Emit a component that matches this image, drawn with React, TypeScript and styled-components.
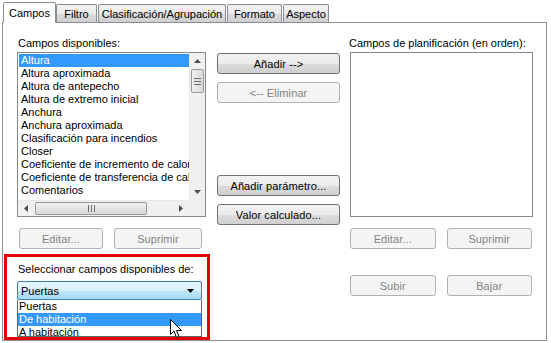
import styled, { createGlobalStyle } from "styled-components";

const GlobalStyle = createGlobalStyle`
  html, body {
    margin: 0;
    padding: 0;
    background: #ffffff;
  }
  body {
    font-family: "Liberation Sans", Arial, sans-serif;
    font-size: 11px;
    color: #000;
  }
`;

const Window = styled.div`
  width: 551px;
  height: 343px;
  box-sizing: border-box;
  padding: 2px 4px 3px 2px;
  display: flex;
  flex-direction: column;
  background: #ffffff;
  position: relative;
  overflow: hidden;
`;

const TabStrip = styled.div`
  display: flex;
  align-items: flex-end;
  height: 21px;
  padding-left: 1px;
  position: relative;
  z-index: 2;
`;

const Tab = styled.div<{ $w: number; $active?: boolean }>`
  width: ${(p) => p.$w}px;
  box-sizing: border-box;
  height: ${(p) => (p.$active ? 21 : 18)}px;
  display: flex;
  align-items: center;
  justify-content: center;
  border: 1px solid #898c95;
  border-bottom: ${(p) => (p.$active ? "1px solid #fff" : "none")};
  margin-right: ${(p) => (p.$active ? 0 : 1)}px;
  margin-bottom: ${(p) => (p.$active ? -1 : 0)}px;
  background: ${(p) =>
    p.$active ? "#ffffff" : "linear-gradient(#f2f2f2, #ebebeb 50%, #dcdcdc 51%, #cfcfcf)"};
  border-radius: 2px 2px 0 0;
  font-size: 11px;
  padding-top: ${(p) => (p.$active ? 0 : 1)}px;
  white-space: nowrap;
`;

const Panel = styled.div`
  flex: 1;
  border: 1px solid #898c95;
  background: #ffffff;
  display: grid;
  grid-template-columns: 192px 123px 184px;
  column-gap: 8px;
  padding: 13px 0 0 14px;
  box-sizing: border-box;
  position: relative;
`;

const Column = styled.div`
  display: flex;
  flex-direction: column;
`;

const Label = styled.div`
  height: 13px;
  line-height: 13px;
  margin: 1px 0 2px 1px;
  white-space: nowrap;
`;

const ListFrame = styled.div<{ $w: number }>`
  width: ${(p) => p.$w}px;
  height: 165px;
  box-sizing: border-box;
  border: 1px solid #828790;
  background: #fff;
  display: grid;
  grid-template-columns: 1fr 16px;
  grid-template-rows: 1fr 16px;
  overflow: hidden;
`;

const EmptyList = styled.div<{ $w: number }>`
  width: ${(p) => p.$w}px;
  height: 165px;
  box-sizing: border-box;
  border: 1px solid #828790;
  background: #fff;
  margin-left: 2px;
`;

const Items = styled.div`
  padding: 1px 0 0 1px;
  overflow: hidden;
`;

const Item = styled.div<{ $sel?: boolean }>`
  height: 13px;
  line-height: 13px;
  padding-left: 2px;
  white-space: nowrap;
  overflow: hidden;
  background: ${(p) => (p.$sel ? "#3399ff" : "transparent")};
  color: ${(p) => (p.$sel ? "#fff" : "#000")};
`;

const VScroll = styled.div`
  background: #f0f0f0;
  border-left: 1px solid #e8e8e8;
  display: flex;
  flex-direction: column;
  align-items: center;
`;

const HScroll = styled.div`
  background: #f0f0f0;
  border-top: 1px solid #e8e8e8;
  display: flex;
  align-items: center;
`;

const Corner = styled.div`
  background: #f0f0f0;
`;

const ArrowCell = styled.div`
  width: 16px;
  height: 16px;
  display: flex;
  align-items: center;
  justify-content: center;
  flex: none;
`;

const VThumb = styled.div`
  width: 13px;
  height: 24px;
  box-sizing: border-box;
  border: 1px solid #999;
  border-radius: 2px;
  background: linear-gradient(90deg, #f1f1f1, #e4e4e4 50%, #d7d7d7);
  display: flex;
  align-items: center;
  justify-content: center;
`;

const HThumb = styled.div`
  width: 112px;
  height: 13px;
  margin-left: 1px;
  box-sizing: border-box;
  border: 1px solid #999;
  border-radius: 2px;
  background: linear-gradient(#f1f1f1, #e4e4e4 50%, #d7d7d7);
  display: flex;
  align-items: center;
  justify-content: center;
`;

const Spacer = styled.div<{ $h?: number }>`
  flex: ${(p) => (p.$h ? "none" : 1)};
  height: ${(p) => (p.$h ? `${p.$h}px` : "auto")};
`;

const Button = styled.div<{ $w?: number; $disabled?: boolean }>`
  width: ${(p) => p.$w ?? 123}px;
  height: 21px;
  box-sizing: border-box;
  border: 1px solid ${(p) => (p.$disabled ? "#adb2b5" : "#707070")};
  border-radius: 3px;
  background: ${(p) =>
    p.$disabled ? "#f4f4f4" : "linear-gradient(#f2f2f2, #ebebeb 50%, #dddddd 51%, #cfcfcf)"};
  color: ${(p) => (p.$disabled ? "#838383" : "#000")};
  display: flex;
  align-items: center;
  justify-content: center;
  white-space: nowrap;
  letter-spacing: 0.1px;
`;

const ButtonRow = styled.div<{ $top: number }>`
  display: flex;
  gap: 11px;
  margin-top: ${(p) => p.$top}px;
  padding-left: 2px;
`;

const MidColumn = styled.div`
  display: flex;
  flex-direction: column;
  padding-top: 17px;
  gap: 8px;
`;

const Highlight = styled.div`
  margin: 5px 0 0 -13px;
  width: 206px;
  height: 86px;
  box-sizing: border-box;
  border: 3px solid #e30000;
  padding: 5px 0 0 10px;
  display: flex;
  flex-direction: column;
  position: relative;
`;

const Combo = styled.div`
  width: 185px;
  height: 21px;
  box-sizing: border-box;
  border: 1px solid #3c7fb1;
  border-radius: 2px;
  background: linear-gradient(#eaf6fd, #d9f0fc 50%, #bee6fd 51%, #a7d9f5);
  display: flex;
  align-items: center;
  padding: 0 7px 0 3px;
  margin-top: 3px;
`;

const ComboText = styled.div`
  flex: 1;
`;

const DropList = styled.div`
  width: 185px;
  box-sizing: border-box;
  border: 1px solid #646464;
  border-top: none;
  background: #fff;
  height: 40px;
  overflow: hidden;
`;

const DropItem = styled(Item)`
  padding-left: 1px;
`;

const Cursor = styled.svg`
  position: absolute;
  left: 163px;
  top: 62px;
`;

const available = [
  "Altura",
  "Altura aproximada",
  "Altura de antepecho",
  "Altura de extremo inicial",
  "Anchura",
  "Anchura aproximada",
  "Clasificación para incendios",
  "Closer",
  "Coeficiente de incremento de calor",
  "Coeficiente de transferencia de calor",
  "Comentarios",
];

const tabs = [
  { label: "Campos", w: 53, active: true },
  { label: "Filtro", w: 41 },
  { label: "Clasificación/Agrupación", w: 128 },
  { label: "Formato", w: 55 },
  { label: "Aspecto", w: 46 },
];

const Tri = ({ dir }: { dir: "up" | "down" | "left" | "right" }) => {
  const pts = {
    up: "0,4 7,4 3.5,0",
    down: "0,0 7,0 3.5,4",
    left: "4,0 4,7 0,3.5",
    right: "0,0 0,7 4,3.5",
  }[dir];
  const vertical = dir === "up" || dir === "down";
  return (
    <svg width={vertical ? 7 : 4} height={vertical ? 4 : 7}>
      <polygon points={pts} fill="#4d4d4d" />
    </svg>
  );
};

const Grip = ({ vertical }: { vertical?: boolean }) => (
  <svg width={7} height={7}>
    {[0, 3, 6].map((o) =>
      vertical ? (
        <line key={o} x1={0} x2={7} y1={o + 0.5} y2={o + 0.5} stroke="#6e6e6e" />
      ) : (
        <line key={o} y1={0} y2={7} x1={o + 0.5} x2={o + 0.5} stroke="#6e6e6e" />
      )
    )}
  </svg>
);

export default function App() {
  return (
    <>
      <GlobalStyle />
      <Window>
        <TabStrip>
          {tabs.map((t) => (
            <Tab key={t.label} $w={t.w} $active={t.active}>
              {t.label}
            </Tab>
          ))}
        </TabStrip>
        <Panel>
          <Column>
            <Label>Campos disponibles:</Label>
            <ListFrame $w={189}>
              <Items>
                {available.map((a, i) => (
                  <Item key={a} $sel={i === 0}>
                    {a}
                  </Item>
                ))}
              </Items>
              <VScroll>
                <ArrowCell>
                  <Tri dir="up" />
                </ArrowCell>
                <VThumb>
                  <Grip vertical />
                </VThumb>
                <Spacer />
                <ArrowCell>
                  <Tri dir="down" />
                </ArrowCell>
              </VScroll>
              <HScroll>
                <ArrowCell>
                  <Tri dir="left" />
                </ArrowCell>
                <HThumb>
                  <Grip />
                </HThumb>
                <Spacer />
                <ArrowCell>
                  <Tri dir="right" />
                </ArrowCell>
              </HScroll>
              <Corner />
            </ListFrame>
            <ButtonRow $top={11}>
              <Button $w={84} $disabled>
                Editar...
              </Button>
              <Button $w={88} $disabled>
                Suprimir
              </Button>
            </ButtonRow>
            <Highlight>
              <Label>Seleccionar campos disponibles de:</Label>
              <Combo>
                <ComboText>Puertas</ComboText>
                <svg width="7" height="4">
                  <polygon points="0,0 7,0 3.5,4" fill="#000" />
                </svg>
              </Combo>
              <DropList>
                <DropItem>Puertas</DropItem>
                <DropItem $sel>De habitación</DropItem>
                <DropItem>A habitación</DropItem>
              </DropList>
              <Cursor width="13" height="20" viewBox="0 0 13 20">
                <path
                  d="M0.5,0.5 L0.5,15.5 L4,12 L6.5,18.5 L9,17.5 L6.5,11.5 L11.5,11.5 Z"
                  fill="#fff"
                  stroke="#000"
                  strokeWidth="1"
                />
              </Cursor>
            </Highlight>
          </Column>
          <MidColumn>
            <Button>Añadir --&gt;</Button>
            <Button $disabled>&lt;-- Eliminar</Button>
            <Spacer $h={56} />
            <Button>Añadir parámetro...</Button>
            <Button>Valor calculado...</Button>
          </MidColumn>
          <Column>
            <Label>Campos de planificación (en orden):</Label>
            <EmptyList $w={183} />
            <ButtonRow $top={11}>
              <Button $w={87} $disabled>
                Editar...
              </Button>
              <Button $w={87} $disabled>
                Suprimir
              </Button>
            </ButtonRow>
            <ButtonRow $top={26}>
              <Button $w={87} $disabled>
                Subir
              </Button>
              <Button $w={87} $disabled>
                Bajar
              </Button>
            </ButtonRow>
          </Column>
        </Panel>
      </Window>
    </>
  );
}
